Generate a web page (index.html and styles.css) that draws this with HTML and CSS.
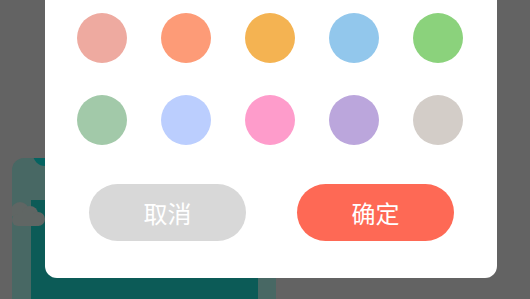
FILE: index.html
```html
<!DOCTYPE html>
<html lang="zh">
<head>
<meta charset="utf-8">
<title>选择颜色</title>
<link rel="stylesheet" href="styles.css">
</head>
<body>
<div class="page">
  <div class="card">
    <div class="card-dot"></div>
    <div class="card-body"></div>
    <svg class="cloud" width="34" height="28" viewBox="0 0 34 28">
      <circle cx="8" cy="11" r="9" fill="#606664"/>
      <circle cx="18" cy="14" r="8" fill="#606664"/>
      <circle cx="26" cy="19" r="7" fill="#606664"/>
      <rect x="0" y="14" width="30" height="12" rx="6" fill="#606664"/>
    </svg>
  </div>
</div>
<div class="dialog">
  <div class="swatches">
    <span class="swatch c1"></span>
    <span class="swatch c2"></span>
    <span class="swatch c3"></span>
    <span class="swatch c4"></span>
    <span class="swatch c5"></span>
    <span class="swatch c6"></span>
    <span class="swatch c7"></span>
    <span class="swatch c8"></span>
    <span class="swatch c9"></span>
    <span class="swatch c10"></span>
  </div>
  <div class="actions">
    <button class="btn btn-cancel">取消</button>
    <button class="btn btn-ok">确定</button>
  </div>
</div>
</body>
</html>
```
FILE: styles.css
```css
html, body {
  margin: 0;
  padding: 0;
  width: 530px;
  height: 299px;
  overflow: hidden;
  background: #636363;
  font-family: "Noto Sans CJK SC", "Noto Sans", sans-serif;
}
.page {
  padding: 158px 0 0 12px;
  height: 299px;
  box-sizing: border-box;
}
.card {
  position: relative;
  width: 264px;
  height: 141px;
  background: #486864;
  border-radius: 12px 12px 0 0;
  overflow: hidden;
}
.card-dot {
  position: absolute;
  left: 21px;
  top: -8px;
  width: 24px;
  height: 16px;
  border-radius: 0 0 12px 12px;
  background: #056361;
}
.card-body {
  position: absolute;
  left: 19px;
  right: 18px;
  top: 42px;
  bottom: 0;
  background: #0c5b57;
}
.cloud {
  position: absolute;
  left: 0;
  top: 42px;
}
.dialog {
  position: absolute;
  left: 45px;
  top: -20px;
  width: 452px;
  height: 298px;
  box-sizing: border-box;
  padding: 33px 0 0 32px;
  background: #ffffff;
  border-radius: 12px;
}
.swatches {
  display: grid;
  grid-template-columns: repeat(5, 50px);
  column-gap: 34px;
  row-gap: 32px;
}
.swatch {
  display: block;
  width: 50px;
  height: 50px;
  border-radius: 50%;
}
.c1 { background: #eeaaa0; }
.c2 { background: #fd9b77; }
.c3 { background: #f4b352; }
.c4 { background: #92c7ec; }
.c5 { background: #8bd27c; }
.c6 { background: #a2c9a9; }
.c7 { background: #bbcefe; }
.c8 { background: #fe9ccb; }
.c9 { background: #bba6dc; }
.c10 { background: #d3cdc8; }
.actions {
  display: flex;
  gap: 51px;
  margin: 39px 0 0 12px;
}
.btn {
  width: 157px;
  height: 57px;
  border: none;
  border-radius: 29px;
  color: #ffffff;
  font-family: "Noto Sans CJK SC", "Noto Sans", sans-serif;
  font-size: 24px;
  line-height: 1;
  padding: 0;
}
.btn-cancel { background: #d8d8d8; }
.btn-ok { background: #fe6955; }
```
